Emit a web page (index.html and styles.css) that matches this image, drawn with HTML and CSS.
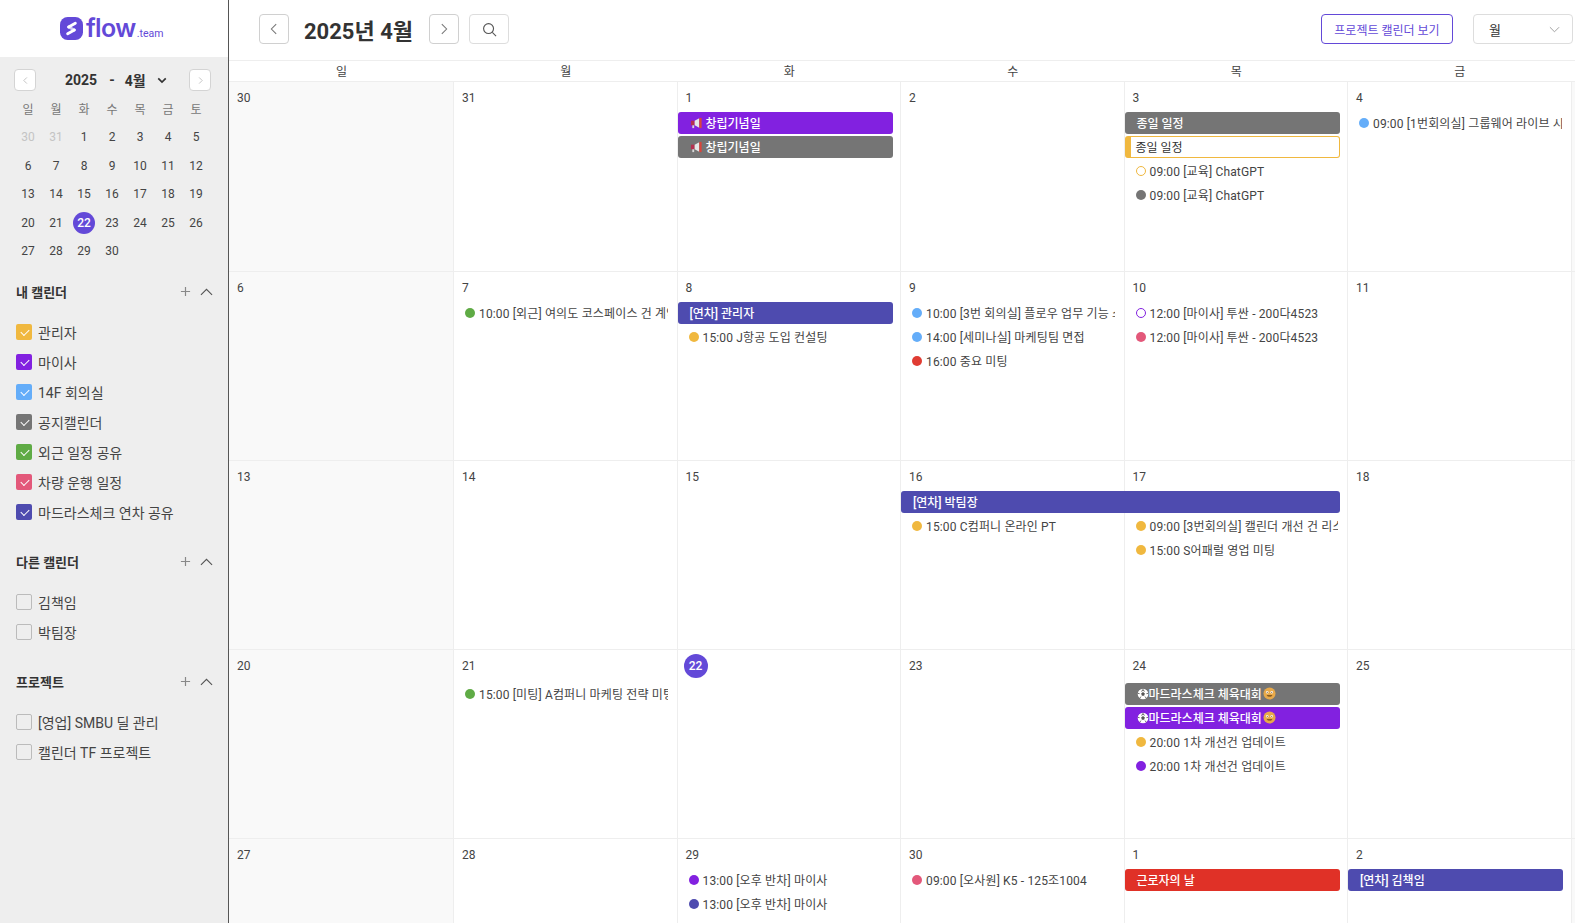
FILE: index.html
```html
<!DOCTYPE html>
<html lang="ko">
<head>
  <meta charset="UTF-8" />
  <title>flow.team 캘린더</title>
  <link rel="stylesheet" href="styles.css">
</head>
<body>
  <svg class="icon-defs" width="0" height="0">
    <symbol id="left" viewBox="0 0 16 16"><path d="M10.5 2.5 5 8l5.5 5.500" fill="none" stroke="currentColor" stroke-width="1.2"/></symbol>
    <symbol id="right" viewBox="0 0 16 16"><path d="M5.5 2.5 11 8l-5.5 5.500" fill="none" stroke="currentColor" stroke-width="1.2"/></symbol>
    <symbol id="up" viewBox="0 0 14 8"><path d="M1 7.2 7 1.2l6 6" fill="none" stroke="currentColor" stroke-width="1.2"/></symbol>
    <symbol id="plus" viewBox="0 0 12 12"><path d="M6 1v10M1 6h10" fill="none" stroke="currentColor" stroke-width="1.3"/></symbol>
    <symbol id="horn" viewBox="0 0 14 12">
      <rect x="1" y="3.500" width="4" height="5" fill="#b5304f"/>
      <path d="M5 3.500 10 1v10L5 8.500z" fill="#e6e6e6"/>
      <rect x="10" y="0.500" width="2.500" height="11" fill="#d9443c"/>
      <rect x="2.500" y="8.500" width="2" height="3" fill="#d8d8d8"/>
    </symbol>
    <symbol id="ball" viewBox="0 0 14 14">
      <circle cx="7" cy="7" r="6.200" fill="#fff"/>
      <path d="M7 4.800 9.200 6.400 8.300 9H5.700L4.800 6.400z" fill="#555"/>
      <path d="M7 .8v1.900L5 3.900M7 2.700l2 1.200M.9 6.200 3 6.600M13.100 6.200 11 6.600M3.200 12l1.400-2M10.800 12 9.400 10" fill="none" stroke="#555" stroke-width="1"/>
    </symbol>
    <symbol id="smile" viewBox="0 0 14 14">
      <circle cx="7" cy="7" r="6.500" fill="#e8a94a"/>
      <circle cx="4.600" cy="5.600" r="1.300" fill="#fff"/><circle cx="9.400" cy="5.600" r="1.300" fill="#fff"/>
      <circle cx="4.600" cy="5.600" r=".6" fill="#5a3a10"/><circle cx="9.400" cy="5.600" r=".6" fill="#5a3a10"/>
      <path d="M4 8.800h6c-.5 2-5.500 2-6 0z" fill="#6b4312"/>
    </symbol>
  </svg>

  <div class="app">
    <aside class="sidebar">
      <div class="logo">
        <svg class="logo-mark" viewBox="0 0 24 24">
          <rect width="24" height="24" rx="8" fill="#6349d8"/>
          <path d="M9 10.500 15 13.500" fill="none" stroke="#cfc8f5" stroke-width="3" stroke-linecap="round"/>
          <path d="M16 6.500 9 10.500M15 13.500 8 17.500" fill="none" stroke="#fff" stroke-width="3" stroke-linecap="round"/>
        </svg>
        <span class="logo-name">flow</span><span class="logo-team">.team</span>
      </div>

      <div class="side-body">
        <div class="mini-head">
          <button class="mini-nav"><svg><use href="#left"/></svg></button>
          <div class="mini-title">
            <span>2025</span><span class="mini-dash">-</span><span>4월</span>
            <svg class="mini-caret" viewBox="0 0 12 8"><path d="M1.500 1.500 6 6l4.500-4.500" fill="none" stroke="currentColor" stroke-width="2"/></svg>
          </div>
          <button class="mini-nav"><svg><use href="#right"/></svg></button>
        </div>

        <div class="mini-grid">
          <span class="mini-dow">일</span><span class="mini-dow">월</span><span class="mini-dow">화</span><span class="mini-dow">수</span><span class="mini-dow">목</span><span class="mini-dow">금</span><span class="mini-dow">토</span>
          <span class="mini-day muted">30</span><span class="mini-day muted">31</span><span class="mini-day">1</span><span class="mini-day">2</span><span class="mini-day">3</span><span class="mini-day">4</span><span class="mini-day">5</span>
          <span class="mini-day">6</span><span class="mini-day">7</span><span class="mini-day">8</span><span class="mini-day">9</span><span class="mini-day">10</span><span class="mini-day">11</span><span class="mini-day">12</span>
          <span class="mini-day">13</span><span class="mini-day">14</span><span class="mini-day">15</span><span class="mini-day">16</span><span class="mini-day">17</span><span class="mini-day">18</span><span class="mini-day">19</span>
          <span class="mini-day">20</span><span class="mini-day">21</span><span class="mini-day"><b class="mini-today">22</b></span><span class="mini-day">23</span><span class="mini-day">24</span><span class="mini-day">25</span><span class="mini-day">26</span>
          <span class="mini-day">27</span><span class="mini-day">28</span><span class="mini-day">29</span><span class="mini-day">30</span>
        </div>

        <section class="cal-group">
          <div class="group-head">
            <h3>내 캘린더</h3>
            <svg class="group-plus"><use href="#plus"/></svg>
            <svg class="group-up"><use href="#up"/></svg>
          </div>
          <label class="cal-item"><i class="check on yellow"></i>관리자</label>
          <label class="cal-item"><i class="check on purple"></i>마이사</label>
          <label class="cal-item"><i class="check on blue"></i>14F 회의실</label>
          <label class="cal-item"><i class="check on gray"></i>공지캘린더</label>
          <label class="cal-item"><i class="check on green"></i>외근 일정 공유</label>
          <label class="cal-item"><i class="check on pink"></i>차량 운행 일정</label>
          <label class="cal-item"><i class="check on indigo"></i>마드라스체크 연차 공유</label>
        </section>

        <section class="cal-group">
          <div class="group-head">
            <h3>다른 캘린더</h3>
            <svg class="group-plus"><use href="#plus"/></svg>
            <svg class="group-up"><use href="#up"/></svg>
          </div>
          <label class="cal-item"><i class="check"></i>김책임</label>
          <label class="cal-item"><i class="check"></i>박팀장</label>
        </section>

        <section class="cal-group">
          <div class="group-head">
            <h3>프로젝트</h3>
            <svg class="group-plus"><use href="#plus"/></svg>
            <svg class="group-up"><use href="#up"/></svg>
          </div>
          <label class="cal-item"><i class="check"></i>[영업] SMBU 딜 관리</label>
          <label class="cal-item"><i class="check"></i>캘린더 TF 프로젝트</label>
        </section>
      </div>
    </aside>

    <main class="main">
      <header class="toolbar">
        <button class="tool-btn"><svg><use href="#left"/></svg></button>
        <h1 class="month-title">2025년 4월</h1>
        <button class="tool-btn"><svg><use href="#right"/></svg></button>
        <button class="tool-btn search-btn">
          <svg viewBox="0 0 16 16"><circle cx="7" cy="7" r="5.300" fill="none" stroke="currentColor" stroke-width="1.200"/><path d="m11 11 4 4" stroke="currentColor" stroke-width="1.200"/></svg>
        </button>
        <button class="project-btn">프로젝트 캘린더 보기</button>
        <div class="view-select">
          <span>월</span>
          <svg viewBox="0 0 12 7"><path d="M1 1l5 5 5-5" fill="none" stroke="currentColor" stroke-width="1"/></svg>
        </div>
      </header>

      <div class="dow-row">
        <span>일</span><span>월</span><span>화</span><span>수</span><span>목</span><span>금</span><span></span>
      </div>

      <div class="month-grid">
        <!-- 1주 -->
        <div class="cell sunday"><div class="date">30</div></div>
        <div class="cell"><div class="date">31</div></div>
        <div class="cell">
          <div class="date">1</div>
          <div class="bar purple"><svg class="emoji horn"><use href="#horn"/></svg>창립기념일</div>
          <div class="bar gray"><svg class="emoji horn"><use href="#horn"/></svg>창립기념일</div>
        </div>
        <div class="cell"><div class="date">2</div></div>
        <div class="cell">
          <div class="date">3</div>
          <div class="bar gray">종일 일정</div>
          <div class="bar outline">종일 일정</div>
          <div class="item"><i class="dot hollow-yellow"></i>09:00 [교육] ChatGPT</div>
          <div class="item"><i class="dot gray"></i>09:00 [교육] ChatGPT</div>
        </div>
        <div class="cell">
          <div class="date">4</div>
          <div class="item"><i class="dot blue"></i>09:00 [1번회의실] 그룹웨어 라이브 시연</div>
        </div>
        <div class="cell sunday"></div>

        <!-- 2주 -->
        <div class="cell sunday"><div class="date">6</div></div>
        <div class="cell">
          <div class="date">7</div>
          <div class="item"><i class="dot green"></i>10:00 [외근] 여의도 코스페이스 건 계약</div>
        </div>
        <div class="cell">
          <div class="date">8</div>
          <div class="bar indigo">[연차] 관리자</div>
          <div class="item"><i class="dot yellow"></i>15:00 J항공 도입 컨설팅</div>
        </div>
        <div class="cell">
          <div class="date">9</div>
          <div class="item"><i class="dot blue"></i>10:00 [3번 회의실] 플로우 업무 기능 소개</div>
          <div class="item"><i class="dot blue"></i>14:00 [세미나실] 마케팅팀 면접</div>
          <div class="item"><i class="dot red"></i>16:00 중요 미팅</div>
        </div>
        <div class="cell">
          <div class="date">10</div>
          <div class="item"><i class="dot hollow-purple"></i>12:00 [마이사] 투싼 - 200다4523</div>
          <div class="item"><i class="dot pink"></i>12:00 [마이사] 투싼 - 200다4523</div>
        </div>
        <div class="cell"><div class="date">11</div></div>
        <div class="cell sunday"></div>

        <!-- 3주 -->
        <div class="cell sunday"><div class="date">13</div></div>
        <div class="cell"><div class="date">14</div></div>
        <div class="cell"><div class="date">15</div></div>
        <div class="cell">
          <div class="date">16</div>
          <div class="bar indigo span-two">[연차] 박팀장</div>
          <div class="item"><i class="dot yellow"></i>15:00 C컴퍼니 온라인 PT</div>
        </div>
        <div class="cell">
          <div class="date">17</div>
          <div class="bar-spacer"></div>
          <div class="item"><i class="dot yellow"></i>09:00 [3번회의실] 캘린더 개선 건 리스트업</div>
          <div class="item"><i class="dot yellow"></i>15:00 S어패럴 영업 미팅</div>
        </div>
        <div class="cell"><div class="date">18</div></div>
        <div class="cell sunday"></div>

        <!-- 4주: 오늘 동그라미 때문에 날짜 줄이 조금 더 높다 -->
        <div class="cell sunday"><div class="date">20</div></div>
        <div class="cell tall-date">
          <div class="date">21</div>
          <div class="item"><i class="dot green"></i>15:00 [미팅] A컴퍼니 마케팅 전략 미팅</div>
        </div>
        <div class="cell">
          <div class="date"><b class="today">22</b></div>
        </div>
        <div class="cell"><div class="date">23</div></div>
        <div class="cell tall-date">
          <div class="date">24</div>
          <div class="bar gray"><svg class="emoji"><use href="#ball"/></svg>마드라스체크 체육대회<svg class="emoji smile"><use href="#smile"/></svg></div>
          <div class="bar purple"><svg class="emoji"><use href="#ball"/></svg>마드라스체크 체육대회<svg class="emoji smile"><use href="#smile"/></svg></div>
          <div class="item"><i class="dot yellow"></i>20:00 1차 개선건 업데이트</div>
          <div class="item"><i class="dot purple"></i>20:00 1차 개선건 업데이트</div>
        </div>
        <div class="cell"><div class="date">25</div></div>
        <div class="cell sunday"></div>

        <!-- 5주 -->
        <div class="cell sunday"><div class="date">27</div></div>
        <div class="cell"><div class="date">28</div></div>
        <div class="cell">
          <div class="date">29</div>
          <div class="item"><i class="dot purple"></i>13:00 [오후 반차] 마이사</div>
          <div class="item"><i class="dot indigo"></i>13:00 [오후 반차] 마이사</div>
        </div>
        <div class="cell">
          <div class="date">30</div>
          <div class="item"><i class="dot pink"></i>09:00 [오사원] K5 - 125조1004</div>
        </div>
        <div class="cell">
          <div class="date">1</div>
          <div class="bar holiday">근로자의 날</div>
        </div>
        <div class="cell">
          <div class="date">2</div>
          <div class="bar indigo">[연차] 김책임</div>
        </div>
        <div class="cell sunday"></div>
      </div>
    </main>
  </div>
</body>
</html>
```

FILE: styles.css
```css
/* General Reset */
* {
  margin: 0;
  padding: 0;
  box-sizing: border-box;
}

html, body {
  height: 100%;
  overflow: hidden;
}

body {
  font-family: Roboto, "Noto Sans CJK KR", sans-serif;
  font-size: 13px;
  color: #333;
  background: #fff;
}

button {
  font-family: inherit;
  background: #fff;
  cursor: pointer;
}

.icon-defs {
  position: absolute;
}

.app {
  display: flex;
  height: 923px;
}

/* Sidebar */
.sidebar {
  width: 229px;
  flex: none;
  display: flex;
  flex-direction: column;
  background: #eee;
  border-right: 1px solid #555;
}

.logo {
  height: 57px;
  background: #fff;
  display: flex;
  align-items: center;
  padding-left: 60px;
  color: #6349d8;
}

.logo-mark {
  width: 23px;
  height: 23px;
  margin-right: 3px;
}

.logo-name {
  font-family: Inter, Roboto, sans-serif;
  font-size: 25px;
  font-weight: 600;
  letter-spacing: -0.6px;
  line-height: 1;
}

.logo-team {
  font-size: 10.5px;
  margin-top: 9px;
  margin-left: 1px;
}

.side-body {
  padding: 12px 14px 0;
}

.mini-head {
  display: flex;
  align-items: center;
  width: 197px;
  height: 22px;
}

.mini-nav {
  width: 22px;
  height: 22px;
  border: 1px solid #d4d4d4;
  border-radius: 4px;
  color: #aaa;
  display: flex;
  align-items: center;
  justify-content: center;
  flex: none;
}

.mini-nav svg {
  width: 9px;
  height: 9px;
}

.mini-title {
  display: flex;
  align-items: center;
  margin-left: 29px;
  margin-right: auto;
  font-size: 14px;
  font-weight: 700;
  color: #333;
}

.mini-dash {
  margin: 0 10px 0 12px;
}

.mini-caret {
  width: 10px;
  height: 7px;
  margin-left: 11px;
}

.mini-grid {
  display: grid;
  grid-template-columns: repeat(7, 28px);
  grid-template-rows: 29px repeat(5, 28.5px);
  margin-top: 3px;
  font-size: 12px;
  text-align: center;
  align-items: center;
  justify-items: center;
}

.mini-dow {
  color: #777;
}

.mini-day {
  color: #444;
}

.mini-day.muted {
  color: #c4c4c4;
}

.mini-today {
  display: block;
  width: 22px;
  height: 22px;
  line-height: 22px;
  border-radius: 50%;
  background: #6349d8;
  color: #fff;
  font-weight: 500;
}

.cal-group {
  margin-bottom: 19.5px;
  padding-left: 2px;
}

.cal-group:first-of-type {
  margin-top: 11px;
}

.group-head {
  display: flex;
  align-items: center;
  height: 30px;
  margin-bottom: 10.5px;
}

.group-head h3 {
  font-size: 13px;
  font-weight: 700;
  color: #333;
  flex: 1;
}

.group-plus {
  width: 11px;
  height: 11px;
  color: #888;
  margin-right: 9px;
}

.group-up {
  width: 13px;
  height: 8px;
  color: #555;
  margin-right: 1px;
}

.cal-item {
  display: flex;
  align-items: center;
  height: 30px;
  font-size: 14px;
  color: #444;
}

/* Checkboxes */
.check {
  position: relative;
  width: 16px;
  height: 16px;
  margin-right: 6px;
  border: 1px solid #bbb;
  border-radius: 2px;
  flex: none;
}

.check.on {
  border: none;
}

.check.on::after {
  content: "";
  position: absolute;
  left: 4.5px;
  top: 4.5px;
  width: 7px;
  height: 4px;
  border-left: 1.5px solid #fff;
  border-bottom: 1.5px solid #fff;
  transform: rotate(-45deg);
}

/* Main */
.main {
  flex: 1;
  min-width: 0;
  overflow: hidden;
}

.toolbar {
  height: 60px;
  display: flex;
  align-items: center;
  padding: 0 2px 2px 30px;
}

.tool-btn {
  width: 30px;
  height: 30px;
  border: 1px solid #d0d0d0;
  border-radius: 4px;
  color: #777;
  display: flex;
  align-items: center;
  justify-content: center;
  flex: none;
}

.tool-btn svg {
  width: 14px;
  height: 14px;
}

.search-btn {
  width: 40px;
  margin-left: 10px;
  border-color: #ddd;
  color: #555;
}

.search-btn svg {
  width: 15px;
  height: 15px;
}

.month-title {
  font-size: 22px;
  font-weight: 700;
  color: #333;
  width: 140px;
  padding-left: 15px;
}

.project-btn {
  margin-left: auto;
  width: 132px;
  height: 30px;
  border: 1px solid #6349d8;
  border-radius: 4px;
  color: #6349d8;
  font-size: 12px;
}

.view-select {
  width: 100px;
  height: 30px;
  margin-left: 20px;
  border: 1px solid #ddd;
  border-radius: 4px;
  display: flex;
  align-items: center;
  justify-content: space-between;
  padding: 0 15px;
  font-size: 13px;
}

.view-select svg {
  width: 11px;
  height: 7px;
  color: #999;
  margin-right: -3px;
}

.dow-row {
  display: grid;
  grid-template-columns: 225px repeat(6, 223.5px);
  height: 22px;
  border-top: 1px solid #eee;
  border-bottom: 1px solid #eee;
  width: 1567px;
  line-height: 22px;
  text-align: center;
  font-size: 12px;
  color: #444;
}

/* Month grid */
.month-grid {
  display: grid;
  grid-template-columns: 225px repeat(6, 223.5px);
  grid-template-rows: 190px repeat(4, 189px);
  width: 1567px;
}

.cell {
  border-right: 1px solid #eee;
  border-bottom: 1px solid #eee;
  min-width: 0;
}

.cell.sunday {
  background: #f9f9f9;
}

.date {
  height: 30px;
  padding: 9px 0 0 8px;
  font-size: 12px;
  line-height: 15px;
  color: #444;
}

.tall-date .date {
  height: 33px;
}

.today {
  display: block;
  width: 24px;
  height: 24px;
  margin: -5px 0 0 -2px;
  border-radius: 50%;
  background: #6349d8;
  color: #fff;
  text-align: center;
  line-height: 25px;
  font-weight: 500;
}

.bar {
  display: flex;
  align-items: center;
  width: 215px;
  height: 22px;
  margin-bottom: 2px;
  padding: 0 0 1px 12px;
  border-radius: 3px;
  font-size: 12px;
  font-weight: 500;
  color: #fff;
  white-space: nowrap;
  overflow: hidden;
}

.bar.span-two {
  position: relative;
  width: 439px;
}

.bar-spacer {
  height: 24px;
}

.bar.outline {
  background: #fff;
  color: #333;
  font-weight: 400;
  border: 1px solid #f0b83f;
  border-left-width: 6px;
  padding-left: 5px;
}

.bar.holiday {
  background: #e03127;
}

.emoji {
  width: 12px;
  height: 12px;
  flex: none;
}

.emoji.horn {
  width: 13px;
  margin-right: 3px;
}

.emoji.smile {
  width: 13px;
  height: 13px;
  margin-left: 1px;
}

.item {
  display: flex;
  align-items: center;
  height: 22px;
  margin: 0 9px 2px 0;
  padding: 0 0 2px 11px;
  font-size: 12px;
  letter-spacing: 0.15px;
  color: #444;
  white-space: nowrap;
  overflow: hidden;
}

.dot {
  width: 10px;
  height: 10px;
  margin: 2px 4px 0 0;
  border-radius: 50%;
  flex: none;
}

.dot.hollow-yellow {
  border: 1px solid #f0b83f;
}

.dot.hollow-purple {
  border: 1px solid #8221e0;
}

/* Calendar colours */
.yellow { background: #f0b83f; }
.purple { background: #8221e0; }
.blue { background: #64adf9; }
.gray { background: #757575; }
.green { background: #5fab45; }
.pink { background: #e3587a; }
.indigo { background: #4e4baf; }
.red { background: #e03c33; }
```
